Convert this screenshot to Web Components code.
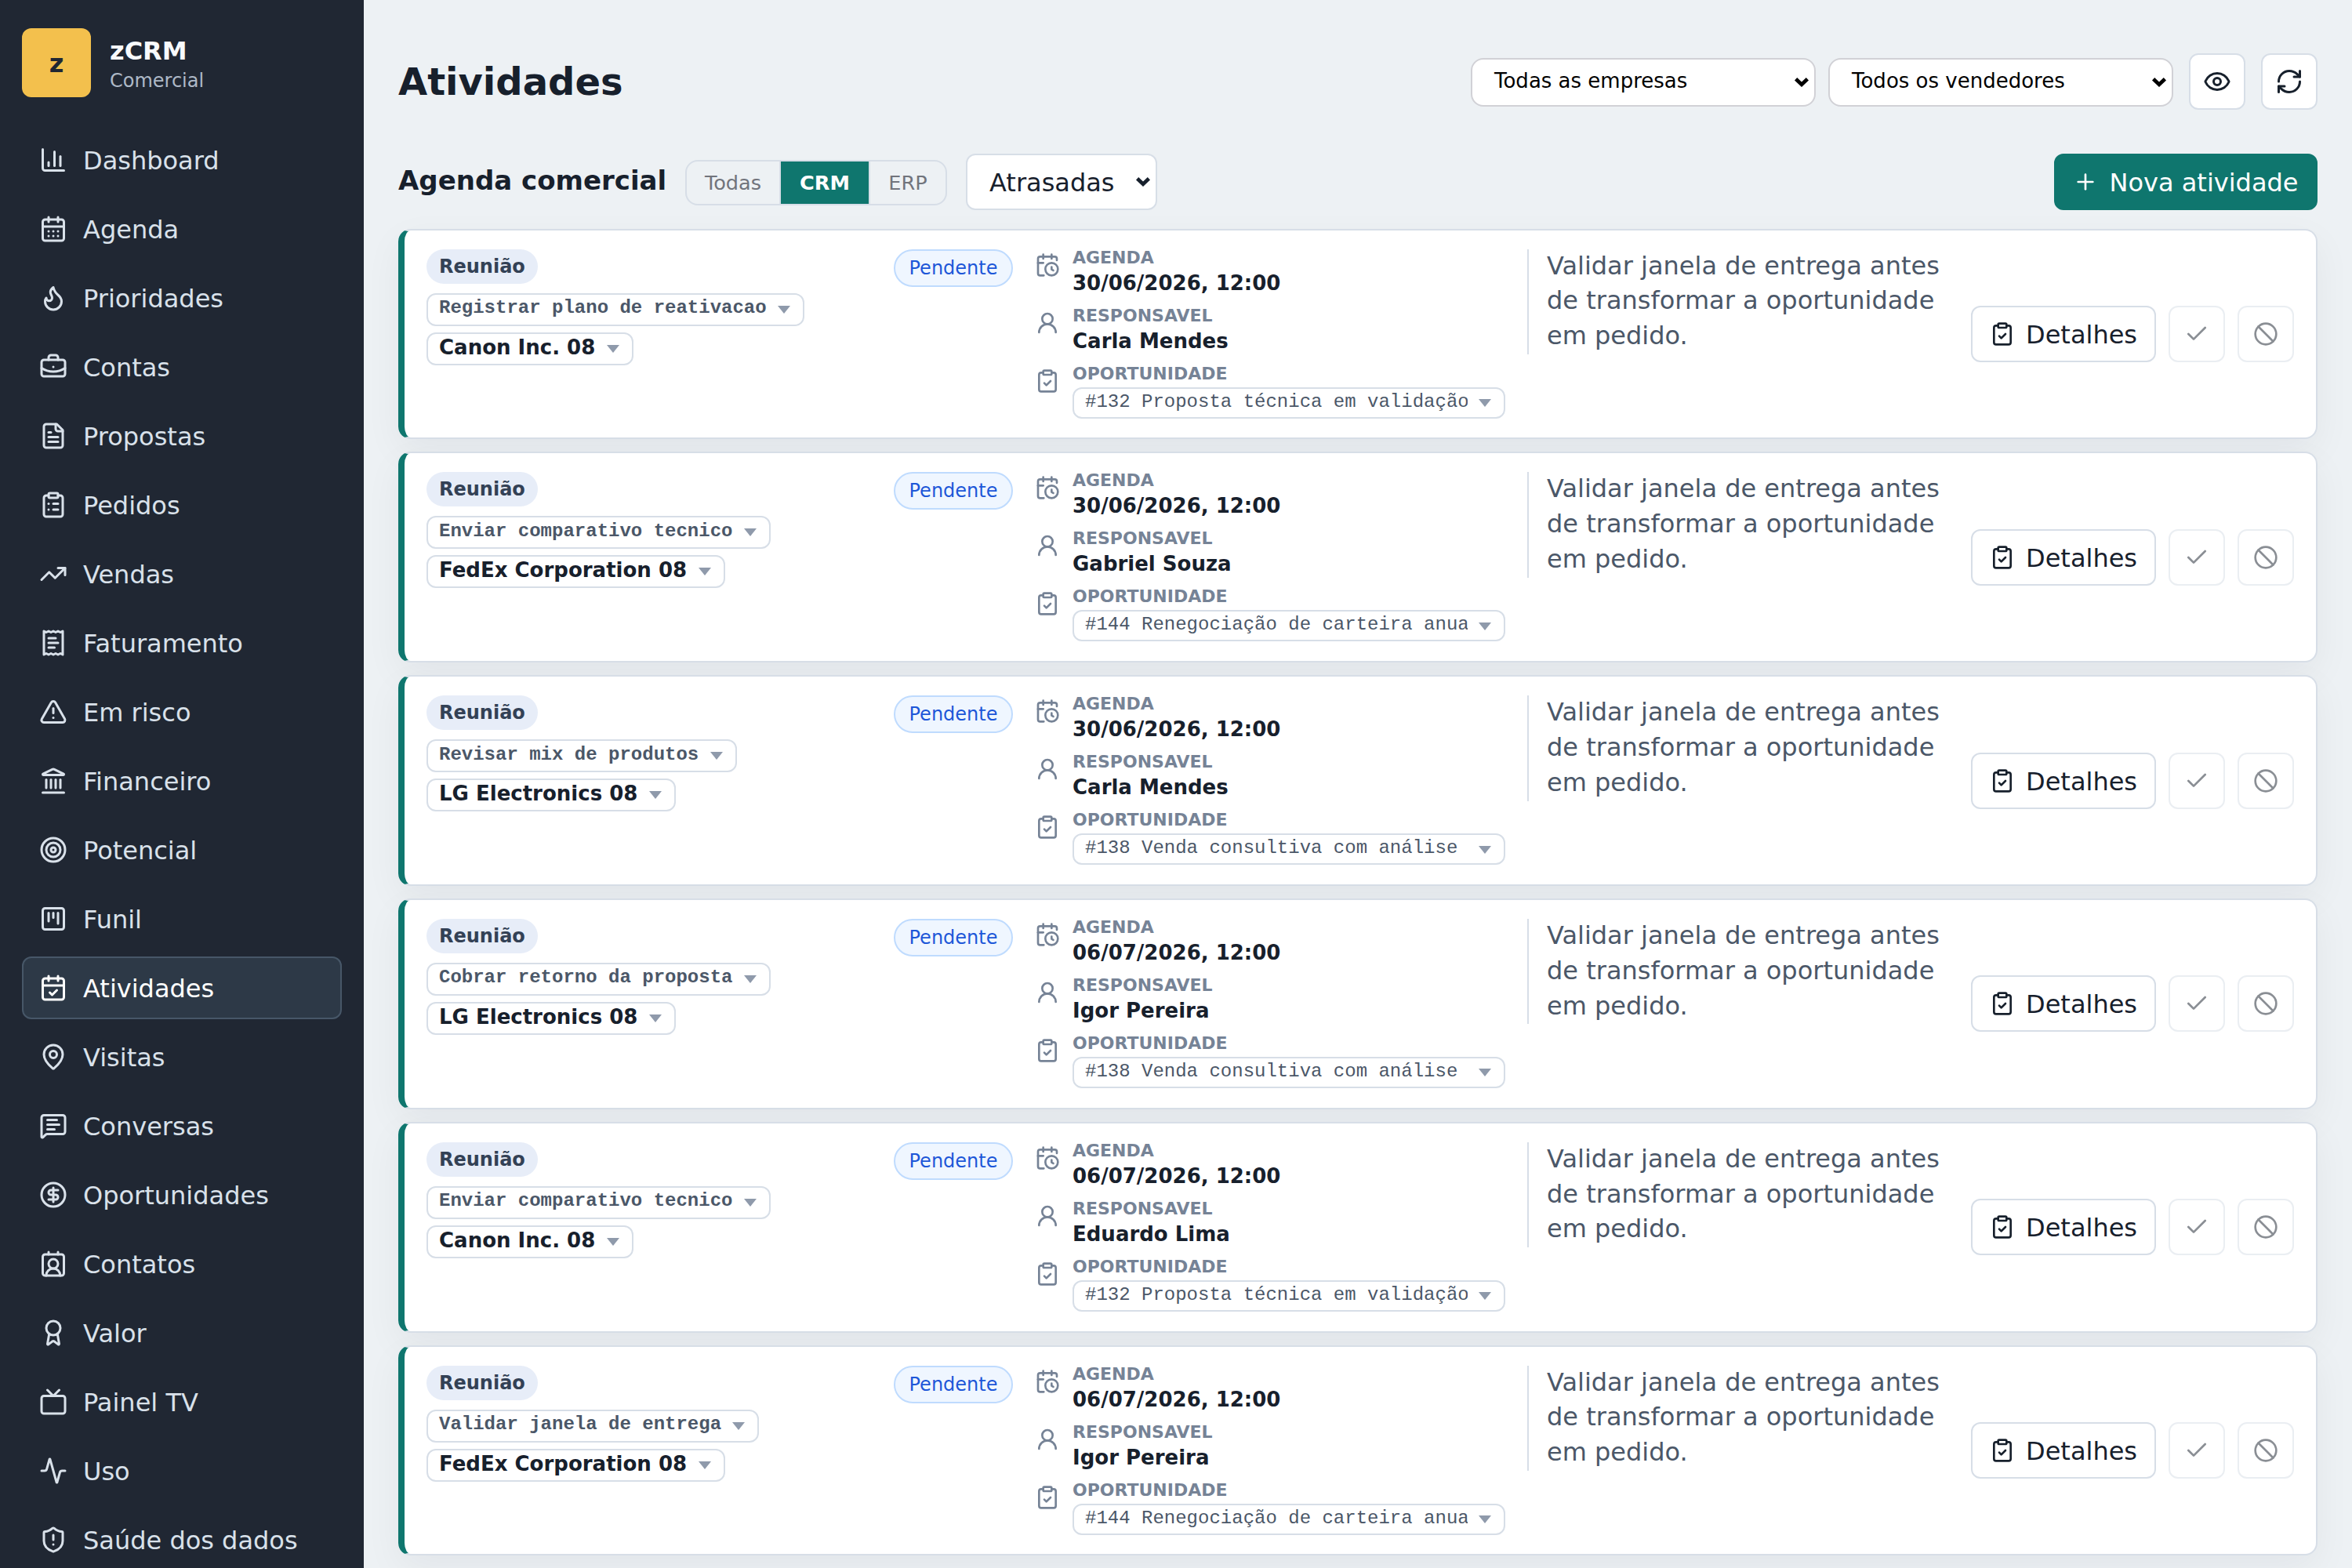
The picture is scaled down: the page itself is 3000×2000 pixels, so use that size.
<!DOCTYPE html>
<html lang="pt-BR">
<head>
<meta charset="utf-8">
<title>zCRM</title>
<style>
html,body{margin:0;height:100%}
body{width:3000px;height:2000px;overflow:hidden;background:#edf1f4;font-family:"DejaVu Sans",sans-serif;color:#17202c}
</style>
</head>
<body>
<crm-app></crm-app>
<script>
const ICONS={
chart:'<path d="M3 3v16a2 2 0 0 0 2 2h16"/><path d="M18 17V9"/><path d="M13 17V5"/><path d="M8 17v-3"/>',
calendarDays:'<path d="M8 2v4"/><path d="M16 2v4"/><rect width="18" height="18" x="3" y="4" rx="2"/><path d="M3 10h18"/><path d="M8 14h.01"/><path d="M12 14h.01"/><path d="M16 14h.01"/><path d="M8 18h.01"/><path d="M12 18h.01"/><path d="M16 18h.01"/>',
flame:'<path d="M12 3q1 4 4 6.5t3 5.5a1 1 0 0 1-14 0 5 5 0 0 1 1-3 1 1 0 0 0 5 0c0-2-1.5-3-1.5-5q0-2 2.5-4"/>',
briefcase:'<path d="M12 12h.01"/><path d="M16 6V4a2 2 0 0 0-2-2h-4a2 2 0 0 0-2 2v2"/><path d="M22 13a18.15 18.15 0 0 1-20 0"/><rect width="20" height="14" x="2" y="6" rx="2"/>',
file:'<path d="M15 2H6a2 2 0 0 0-2 2v16a2 2 0 0 0 2 2h12a2 2 0 0 0 2-2V7Z"/><path d="M14 2v4a2 2 0 0 0 2 2h4"/><path d="M10 9H8"/><path d="M16 13H8"/><path d="M16 17H8"/>',
clipboardList:'<rect width="8" height="4" x="8" y="2" rx="1"/><path d="M16 4h2a2 2 0 0 1 2 2v14a2 2 0 0 1-2 2H6a2 2 0 0 1-2-2V6a2 2 0 0 1 2-2h2"/><path d="M12 11h4"/><path d="M12 16h4"/><path d="M8 11h.01"/><path d="M8 16h.01"/>',
trending:'<path d="M16 7h6v6"/><path d="m22 7-8.5 8.5-5-5L2 17"/>',
receipt:'<path d="M4 2v20l2-1 2 1 2-1 2 1 2-1 2 1 2-1 2 1V2l-2 1-2-1-2 1-2-1-2 1-2-1-2 1Z"/><path d="M14 8H8"/><path d="M16 12H8"/><path d="M13 16H8"/>',
alert:'<path d="m21.73 18-8-14a2 2 0 0 0-3.48 0l-8 14A2 2 0 0 0 4 21h16a2 2 0 0 0 1.73-3"/><path d="M12 9v4"/><path d="M12 17h.01"/>',
landmark:'<path d="M10 18v-7"/><path d="M11.12 2.198a2 2 0 0 1 1.76.006l7.866 3.847c.476.233.31.949-.22.949H3.474c-.53 0-.695-.716-.22-.949z"/><path d="M14 18v-7"/><path d="M18 18v-7"/><path d="M3 22h18"/><path d="M6 18v-7"/>',
target:'<circle cx="12" cy="12" r="10"/><circle cx="12" cy="12" r="6"/><circle cx="12" cy="12" r="2"/>',
kanban:'<rect width="18" height="18" x="3" y="3" rx="2"/><path d="M8 7v7"/><path d="M12 7v4"/><path d="M16 7v9"/>',
calendarCheck:'<path d="M8 2v4"/><path d="M16 2v4"/><rect width="18" height="18" x="3" y="4" rx="2"/><path d="M3 10h18"/><path d="m9 16 2 2 4-4"/>',
pin:'<path d="M20 10c0 4.993-5.539 10.193-7.399 11.799a1 1 0 0 1-1.202 0C9.539 20.193 4 14.993 4 10a8 8 0 0 1 16 0"/><circle cx="12" cy="10" r="3"/>',
message:'<path d="M22 17a2 2 0 0 1-2 2H6.828a2 2 0 0 0-1.414.586l-2.202 2.202A.71.71 0 0 1 2 21.286V5a2 2 0 0 1 2-2h16a2 2 0 0 1 2 2z"/><path d="M7 11h10"/><path d="M7 15h6"/><path d="M7 7h8"/>',
dollar:'<circle cx="12" cy="12" r="10"/><path d="M16 8h-6a2 2 0 1 0 0 4h4a2 2 0 1 1 0 4H8"/><path d="M12 18V6"/>',
contact:'<path d="M16 2v2"/><path d="M17.915 22a6 6 0 0 0-12 0"/><path d="M8 2v2"/><circle cx="12" cy="12" r="4"/><rect x="3" y="4" width="18" height="18" rx="2"/>',
award:'<path d="m15.477 12.89 1.515 8.526a.5.5 0 0 1-.81.47l-3.58-2.687a1 1 0 0 0-1.197 0l-3.586 2.686a.5.5 0 0 1-.81-.469l1.514-8.526"/><circle cx="12" cy="8" r="6"/>',
tv:'<path d="m17 2-5 5-5-5"/><rect width="20" height="15" x="2" y="7" rx="2"/>',
activity:'<path d="M22 12h-2.48a2 2 0 0 0-1.93 1.46l-2.35 8.36a.25.25 0 0 1-.48 0L9.24 2.18a.25.25 0 0 0-.48 0l-2.35 8.36A2 2 0 0 1 4.49 12H2"/>',
shield:'<path d="M20 13c0 5-3.5 7.5-7.66 8.95a1 1 0 0 1-.67-.01C7.5 20.5 4 18 4 13V6a1 1 0 0 1 1-1c2 0 4.5-1.2 6.24-2.72a1.17 1.17 0 0 1 1.52 0C14.51 3.81 17 5 19 5a1 1 0 0 1 1 1z"/><path d="M12 8v4"/><path d="M12 16h.01"/>',
eye:'<path d="M2.062 12.348a1 1 0 0 1 0-.696 10.75 10.75 0 0 1 19.876 0 1 1 0 0 1 0 .696 10.75 10.75 0 0 1-19.876 0"/><circle cx="12" cy="12" r="3"/>',
refresh:'<path d="M3 12a9 9 0 0 1 9-9 9.75 9.75 0 0 1 6.74 2.74L21 8"/><path d="M21 3v5h-5"/><path d="M21 12a9 9 0 0 1-9 9 9.75 9.75 0 0 1-6.74-2.74L3 16"/><path d="M8 16H3v5"/>',
plus:'<path d="M5 12h14"/><path d="M12 5v14"/>',
calendarClock:'<path d="M16 14v2.2l1.6 1"/><path d="M16 2v4"/><path d="M21 7.5V6a2 2 0 0 0-2-2H5a2 2 0 0 0-2 2v14a2 2 0 0 0 2 2h3.5"/><path d="M3 10h5"/><path d="M8 2v4"/><circle cx="16" cy="16" r="6"/>',
user:'<circle cx="12" cy="8" r="5"/><path d="M20 21a8 8 0 0 0-16 0"/>',
clipboardCheck:'<rect width="8" height="4" x="8" y="2" rx="1"/><path d="M16 4h2a2 2 0 0 1 2 2v14a2 2 0 0 1-2 2H6a2 2 0 0 1-2-2V6a2 2 0 0 1 2-2h2"/><path d="m9 14 2 2 4-4"/>',
check:'<path d="M20 6 9 17l-5-5"/>',
ban:'<circle cx="12" cy="12" r="10"/><path d="m4.9 4.9 14.2 14.2"/>'
};
function define(name,html){
  customElements.define(name,class extends HTMLElement{
    connectedCallback(){
      if(this.shadowRoot)return;
      const root=this.attachShadow({mode:'open'});
      const t=document.createElement('template');
      t.innerHTML=typeof html==='function'?html(this):html;
      root.append(t.content.cloneNode(true));
    }
  });
}
define('ui-icon',el=>`<style>:host{display:block;flex:none;width:var(--s,32px);height:var(--s,32px)}svg{display:block;width:100%;height:100%}</style>
<svg viewBox="0 0 24 24" fill="none" stroke="currentColor" stroke-width="2" stroke-linecap="round" stroke-linejoin="round">${ICONS[el.getAttribute('name')]}</svg>`);

define('nav-item',el=>`<style>
:host{display:flex;align-items:center;gap:20px;box-sizing:border-box;height:80px;padding:0 20px;border:2px solid transparent;border-radius:12px;font-size:32px;color:#d9e1ea;white-space:nowrap}
:host([active]){background:#2d3947;border-color:#475768;color:#fff}
ui-icon{--s:36px}
span{padding-top:2px}
</style><ui-icon name="${el.getAttribute('icon')}"></ui-icon><span><slot></slot></span>`);

define('app-sidebar',`<style>
:host{display:block;box-sizing:border-box;width:464px;flex:none;height:2000px;overflow:hidden;background:#202733;padding:36px 28px}
.brand{display:flex;align-items:center;gap:24px;height:88px;margin-bottom:40px}
.logo{box-sizing:border-box;padding-top:1px;width:88px;height:88px;border-radius:12px;background:#f3c04d;color:#202733;font-weight:700;font-size:32px;display:grid;place-items:center}
.name{display:flex;flex-direction:column;gap:5px;padding-top:3px}
strong{font-size:32px;line-height:37px;color:#f8fafc}
small{font-size:24px;line-height:28px;color:#aeb9c7}
nav{display:flex;flex-direction:column;gap:8px}
</style>
<div class="brand"><div class="logo">z</div><div class="name"><strong>zCRM</strong><small>Comercial</small></div></div>
<nav>
<nav-item icon="chart">Dashboard</nav-item><nav-item icon="calendarDays">Agenda</nav-item><nav-item icon="flame">Prioridades</nav-item><nav-item icon="briefcase">Contas</nav-item><nav-item icon="file">Propostas</nav-item><nav-item icon="clipboardList">Pedidos</nav-item><nav-item icon="trending">Vendas</nav-item><nav-item icon="receipt">Faturamento</nav-item><nav-item icon="alert">Em risco</nav-item><nav-item icon="landmark">Financeiro</nav-item><nav-item icon="target">Potencial</nav-item><nav-item icon="kanban">Funil</nav-item><nav-item icon="calendarCheck" active>Atividades</nav-item><nav-item icon="pin">Visitas</nav-item><nav-item icon="message">Conversas</nav-item><nav-item icon="dollar">Oportunidades</nav-item><nav-item icon="contact">Contatos</nav-item><nav-item icon="award">Valor</nav-item><nav-item icon="tv">Painel TV</nav-item><nav-item icon="activity">Uso</nav-item><nav-item icon="shield">Saúde dos dados</nav-item>
</nav>`);

define('ui-button',el=>`<style>
:host{display:inline-flex;align-items:center;justify-content:center;gap:14px;box-sizing:border-box;height:72px;min-width:72px;padding:0 22px;border:2px solid #d7dee7;border-radius:12px;background:#fff;color:#17202c;font-size:32px;white-space:nowrap}
:host([icon-only]){padding:0;width:72px}
:host([primary]){background:#0f766e;border-color:#0f766e;color:#fff}
:host([disabled]){opacity:.5}
ui-icon{--s:32px}
:host([large]) ui-icon{--s:36px}
span{padding-top:2px}
</style><ui-icon name="${el.getAttribute('icon')}"></ui-icon>${el.hasAttribute('icon-only')?'':'<span><slot></slot></span>'}`);

define('ui-select',`<style>
:host{display:flex;align-items:center;justify-content:space-between;box-sizing:border-box;height:62px;width:440px;padding:0 7px 0 28px;border:2px solid #d1d1d6;border-radius:16px;background:#fff;color:#000;font-size:26px;white-space:nowrap}
:host([period]){height:72px;width:244px;border-color:#d7dee7;border-radius:12px;font-size:32px;color:#17202c}
svg{display:block;width:18px;height:12px}
span{padding-bottom:4px}
:host([period]) span{padding:2px 0 0}
</style><span><slot></slot></span><svg viewBox="0 0 18 12" fill="currentColor"><path d="M0 3.4 3.2 0 9 5.6 14.8 0 18 3.4 9 12Z"/></svg>`);

define('segment-control',`<style>
:host{display:flex;box-sizing:border-box;width:334px;height:58px;border:2px solid #d7dee7;border-radius:16px;overflow:hidden;font-size:25.6px;color:#71747c}
span{display:flex;align-items:center;justify-content:center;box-sizing:border-box;width:118px}
span+span{width:114px;border-left:2px solid #d7dee7}
span:last-child{width:98px}
.on{background:#0f766e;background-clip:padding-box;color:#fff;font-weight:700}
</style><span>Todas</span><span class="on">CRM</span><span>ERP</span>`);

define('chip-select',`<style>
:host{display:inline-flex;align-items:center;justify-content:space-between;gap:14.4px;box-sizing:border-box;height:42px;padding:0 16px 0 14px;border:2px solid #d7dee7;border-radius:12px;background:#fff;color:#4b5768;font:700 24px/36px "Liberation Mono",monospace;white-space:pre}
:host([account]){font:700 26px/34px "DejaVu Sans",sans-serif;color:#17202c;gap:15px}
:host([deal]){font-weight:400;height:40px;width:552px;gap:0}
span{padding-bottom:3px}
:host([account]) span{padding-bottom:4px}
:host([deal]) span{padding-bottom:2px;width:488px;overflow:hidden}
i{width:0;height:0;border:8px solid transparent;border-top:10px solid #8f9aab;border-bottom:0}
:host([deal]) i{margin-top:1px}
</style><span><slot></slot></span><i></i>`);

define('meta-row',el=>`<style>
:host{display:flex;gap:16px}
ui-icon{color:#768396;margin-top:4px}
div{display:flex;flex-direction:column;gap:6px;align-items:flex-start}
b{font-size:22px;line-height:22px;color:#768396}
strong{font-size:26px;line-height:30px;white-space:nowrap}
</style><ui-icon name="${el.getAttribute('icon')}"></ui-icon><div><b>${el.getAttribute('label')}</b>${el.hasAttribute('plain')?'<slot></slot>':'<strong><slot></slot></strong>'}</div>`);

define('activity-card',el=>{const a=n=>el.getAttribute(n);return `<style>
:host{display:grid;grid-template-columns:748px 600px 538px 412px;column-gap:28px;box-sizing:border-box;height:268.8px;padding:24px 28px;border:2px solid #d7dee7;border-left:8px solid #0f766e;border-radius:16px;background:#fff;box-shadow:0 16px 48px rgba(15,23,42,.05)}
.who{display:flex;justify-content:space-between;align-items:flex-start}
.left{display:flex;flex-direction:column;align-items:flex-start}
.kind{height:44px;line-height:45px;padding:0 16px;border-radius:22px;background:#e7edf8;color:#334155;font-size:24px;font-weight:700;margin-bottom:12px}
.left chip-select+chip-select{margin-top:8px}
.status{box-sizing:border-box;height:48px;line-height:44px;width:152px;text-align:center;border:2px solid #bfdbfe;border-radius:24px;background:#eff6ff;color:#1d57d8;font-size:24px}
.meta{display:flex;flex-direction:column;gap:16px}
.note{align-self:start;height:134.4px;border-left:2px solid #d7dee7}
p{margin:-1px 0 0;padding-left:23px;font-size:32px;line-height:44.8px;color:#4b5768;white-space:nowrap}
.act{display:flex;gap:16px;align-self:center}
.act ui-button:first-child{width:236px}
</style>
<div class="who"><div class="left"><span class="kind">Reunião</span><chip-select>${a('task')}</chip-select><chip-select account>${a('account')}</chip-select></div><span class="status">Pendente</span></div>
<div class="meta"><meta-row icon="calendarClock" label="AGENDA">${a('date')}</meta-row><meta-row icon="user" label="RESPONSAVEL">${a('owner')}</meta-row><meta-row icon="clipboardCheck" label="OPORTUNIDADE" plain><chip-select deal>${a('deal')}</chip-select></meta-row></div>
<div class="note"><p>Validar janela de entrega antes<br>de transformar a oportunidade<br>em pedido.</p></div>
<div class="act"><ui-button icon="clipboardCheck">Detalhes</ui-button><ui-button icon="check" icon-only disabled></ui-button><ui-button icon="ban" icon-only disabled></ui-button></div>`});

define('page-header',`<style>
:host{display:flex;align-items:center;justify-content:space-between;height:72px}
h1{margin:0;font-size:48px;line-height:56px}
div{display:flex;align-items:center;gap:20px}
ui-select{margin-top:2px}
ui-select+ui-select{margin-left:-4px}
</style><h1>Atividades</h1><div><ui-select>Todas as empresas</ui-select><ui-select>Todos os vendedores</ui-select><ui-button icon="eye" icon-only large></ui-button><ui-button icon="refresh" icon-only large></ui-button></div>`);

define('page-toolbar',`<style>
:host{display:flex;align-items:center;justify-content:space-between;height:72px}
h2{margin:0;padding-bottom:4px;font-size:34px;line-height:40px;width:342px;white-space:nowrap}
div{display:flex;align-items:center;gap:24px}
segment-control{margin-top:2px}
ui-button{width:336px}
</style><div><h2>Agenda comercial</h2><segment-control></segment-control><ui-select period>Atrasadas</ui-select></div><ui-button icon="plus" primary>Nova atividade</ui-button>`);

define('crm-app',`<style>
:host{display:flex;width:3000px;height:2000px;overflow:hidden}
main{flex:1;min-width:0;box-sizing:border-box;padding:68px 44px 0}
page-toolbar{margin:56px 0 23.6px}
section{display:flex;flex-direction:column;gap:16px}
</style><app-sidebar></app-sidebar><main><page-header></page-header><page-toolbar></page-toolbar><section>
<activity-card task="Registrar plano de reativacao" account="Canon Inc. 08" date="30/06/2026, 12:00" owner="Carla Mendes" deal="#132 Proposta técnica em validação"></activity-card>
<activity-card task="Enviar comparativo tecnico" account="FedEx Corporation 08" date="30/06/2026, 12:00" owner="Gabriel Souza" deal="#144 Renegociação de carteira anua"></activity-card>
<activity-card task="Revisar mix de produtos" account="LG Electronics 08" date="30/06/2026, 12:00" owner="Carla Mendes" deal="#138 Venda consultiva com análise "></activity-card>
<activity-card task="Cobrar retorno da proposta" account="LG Electronics 08" date="06/07/2026, 12:00" owner="Igor Pereira" deal="#138 Venda consultiva com análise "></activity-card>
<activity-card task="Enviar comparativo tecnico" account="Canon Inc. 08" date="06/07/2026, 12:00" owner="Eduardo Lima" deal="#132 Proposta técnica em validação"></activity-card>
<activity-card task="Validar janela de entrega" account="FedEx Corporation 08" date="06/07/2026, 12:00" owner="Igor Pereira" deal="#144 Renegociação de carteira anua"></activity-card>
</section></main>`);
</script>
</body>
</html>
